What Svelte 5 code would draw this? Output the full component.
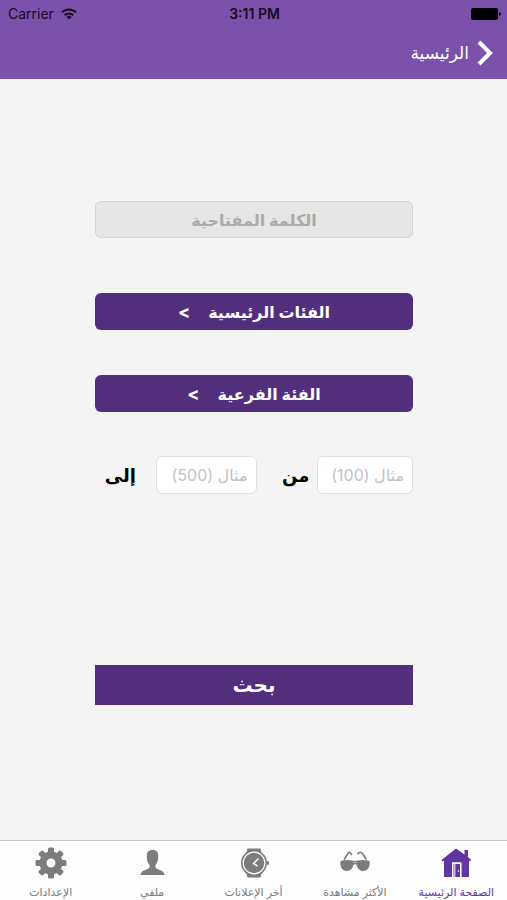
<script lang="ts">
  /**
   * Search screen: status bar, back link, keyword and category filters,
   * a price range and the bottom tab bar. The whole page reads right to left.
   */
  interface Tab {
    id: string;
    label: string;
  }

  // First tab sits at the right edge.
  const tabs: Tab[] = [
    { id: 'home', label: 'الصفحة الرئيسية' },
    { id: 'popular', label: 'الأكثر مشاهدة' },
    { id: 'latest', label: 'أخر الإعلانات' },
    { id: 'profile', label: 'ملفي' },
    { id: 'settings', label: 'الإعدادات' },
  ];

  const TEETH = [0, 45, 90, 135, 180, 225, 270, 315];

  let active = $state('home');
  let keyword = $state('');
  let priceFrom = $state('');
  let priceTo = $state('');
</script>

<div class="screen" dir="rtl">
  <header>
    <div class="status" dir="ltr">
      <span class="carrier">
        Carrier
        <svg width="16" height="12" viewBox="0 0 16 12" aria-hidden="true">
          <g fill="none" stroke="currentColor" stroke-width="2">
            <path d="M1 4.4a10 10 0 0 1 14 0" />
            <path d="M3.6 7.2a6.3 6.3 0 0 1 8.8 0" />
          </g>
          <path d="M8 11.6L5.4 9a3.7 3.7 0 0 1 5.2 0z" fill="currentColor" />
        </svg>
      </span>
      <span class="time">3:11 PM</span>
      <svg class="battery" width="30" height="12" viewBox="0 0 30 12" aria-hidden="true">
        <rect x="0" y="0" width="27" height="12" rx="2" />
        <path d="M28 4c2.4.4 2.4 3.600 0 4z" />
      </svg>
    </div>
    <nav>
      <a class="back" href="#home">
        <svg width="16" height="26" viewBox="0 0 16 26" aria-hidden="true">
          <path d="M2 2L13 13L2 24" fill="none" stroke="currentColor" stroke-width="4" />
        </svg>
        <span>الرئيسية</span>
      </a>
    </nav>
  </header>

  <main>
    <input class="keyword" type="text" placeholder="الكلمة المفتاحية" aria-label="الكلمة المفتاحية" bind:value={keyword} />
    <button class="picker" type="button">الفئات الرئيسية<span class="arrow">&gt;</span></button>
    <button class="picker" type="button">الفئة الفرعية<span class="arrow">&gt;</span></button>

    <div class="range">
      <input id="price-from" type="text" placeholder="مثال (100)" bind:value={priceFrom} />
      <label class="from" for="price-from">من</label>
      <input id="price-to" type="text" placeholder="مثال (500)" bind:value={priceTo} />
      <label class="to" for="price-to">إلى</label>
    </div>

    <button class="search" type="button">بحث</button>
  </main>

  <footer>
    {#each tabs as tab (tab.id)}
      <button class="tab" class:active={tab.id === active} type="button" onclick={() => (active = tab.id)}>
        <svg width="32" height="32" viewBox="0 0 32 32" fill="currentColor" aria-hidden="true">
          {#if tab.id === 'home'}
            <path d="M16 1.500L1.500 13l1 1.500L4 13.500V30h8V15.500h9.500V30H29V13.500l1 1 1.200-1.500L28 10V3h-3.500v4.500z" />
            <path d="M13.500 17h6.500v13h-6.500z" />
            <path d="M12.500 30V16h8.200v14M14.800 30V16" fill="none" stroke="#fff" stroke-width="1" />
            <circle cx="18.500" cy="24" r=".8" fill="#fff" />
          {:else if tab.id === 'popular'}
            <g fill="none" stroke="currentColor" stroke-width="1.700" stroke-linecap="round">
              <path d="M5.500 12L9 6.500Q10.500 4 12.500 7.500" />
              <path d="M27 12L23.500 6.500Q22 4 19 6.500" />
              <path d="M12 14.500h8M13 17.500q3-2 6 0" stroke-width="1.300" />
            </g>
            <path d="M1.500 14q6.500-2 12.800 0c1 4.500-1.500 10-6.300 10-5 0-7.500-5-6.500-10z" />
            <path d="M30.500 14q-6.500-2-12.800 0c-1 4.500 1.500 10 6.300 10 5 0 7.500-5 6.500-10z" />
          {:else if tab.id === 'latest'}
            <path d="M9.500 1.500h13l1.500 6h-16zM9.500 30.500h13l1.500-6h-16z" />
            <circle cx="16" cy="16" r="13" />
            <circle cx="16" cy="16" r="10.800" fill="none" stroke="#fff" stroke-width="1.200" />
            <rect x="29" y="14" width="2" height="4" rx="1" />
            <path d="M20.500 11.500L15.500 16.500L19.500 19" fill="none" stroke="#fff" stroke-width="1.500" />
          {:else if tab.id === 'profile'}
            <path d="M16.500 3c4.200 0 5.800 2.200 5.700 6 0 4.500-.8 6.800-2.700 9v2.500c1 2.500 8.500 2 9 7.500h-24c.5-5.500 8-5 9-7.500V18c-1.900-2.200-2.700-4.500-2.700-9-.1-3.800 1.500-6 5.700-6z" />
          {:else}
            {#each TEETH as angle}
              <rect x="13" y="0.500" width="6" height="7" rx="1.500" transform="rotate({angle} 16 16)" />
            {/each}
            <circle cx="16" cy="16" r="8" fill="none" stroke="currentColor" stroke-width="7" />
          {/if}
        </svg>
        <span>{tab.label}</span>
      </button>
    {/each}
  </footer>
</div>

<style>
  :global(body) {
    margin: 0;
  }

  .screen {
    min-height: 100vh;
    display: flex;
    flex-direction: column;
    background: #f4f4f4;
    font-family: Inter, 'DejaVu Sans', sans-serif;
  }

  button,
  input {
    box-sizing: border-box;
    margin: 0;
    font-family: inherit;
  }

  header {
    background: #7b52ab;
    color: #fff;
  }

  .status {
    display: grid;
    grid-template-columns: 1fr auto 1fr;
    align-items: center;
    height: 27px;
    padding: 0 6px 0 8px;
    color: #160a22;
    font-size: 14px;
  }

  .carrier {
    display: flex;
    align-items: center;
    gap: 7px;
  }

  .time {
    font-weight: 600;
  }

  .battery {
    justify-self: end;
    fill: #000;
  }

  nav {
    display: flex;
    align-items: center;
    height: 52px;
    padding: 0 14px;
  }

  .back {
    display: flex;
    align-items: center;
    gap: 8px;
    color: #fff;
    font-size: 17px;
    text-decoration: none;
  }

  main {
    flex: 1;
    display: flex;
    flex-direction: column;
    padding: 122px 94px 24px 95px;
  }

  .keyword {
    height: 37px;
    padding: 0 8px;
    border: 1px solid #d4d4d4;
    border-radius: 6px;
    background: #e6e6e6;
    color: #555;
    font-size: 16px;
    font-weight: 700;
    text-align: center;
  }

  .keyword::placeholder {
    color: #ababab;
  }

  .picker {
    height: 37px;
    margin-top: 55px;
    border: 0;
    border-radius: 6px;
    background: #522f7c;
    color: #fff;
    font-size: 16px;
    font-weight: 700;
  }

  .picker + .picker {
    margin-top: 45px;
  }

  .arrow {
    margin-inline-start: 18px;
    font-size: 18px;
  }

  .range {
    display: grid;
    grid-template-columns: 96fr 61fr 101fr 61fr;
    align-items: center;
    margin-top: 44px;
  }

  .range input {
    width: 100%;
    height: 38px;
    padding: 0 8px;
    border: 1px solid #e0e0e0;
    border-radius: 6px;
    background: #fff;
    color: #333;
    font-size: 16px;
  }

  .range input::placeholder {
    color: #c2c2c6;
  }

  .range label {
    color: #000;
    font-size: 18px;
    font-weight: 700;
  }

  .from {
    padding-inline-start: 8px;
  }

  .to {
    padding-inline-start: 20px;
  }

  .search {
    height: 40px;
    margin-top: 171px;
    border: 0;
    background: #522f7c;
    color: #fff;
    font-size: 20px;
    font-weight: 700;
  }

  footer {
    display: grid;
    grid-template-columns: repeat(5, 1fr);
    border-top: 1px solid #c4c4c4;
    background: #fdfdfd;
  }

  .tab {
    display: flex;
    flex-direction: column;
    align-items: center;
    gap: 5px;
    height: 59px;
    padding: 6px 0 0;
    border: 0;
    background: none;
    color: #7c7c7c;
    font-size: 11px;
    line-height: 16px;
    white-space: nowrap;
  }

  .tab.active {
    color: #6236a0;
  }
</style>
